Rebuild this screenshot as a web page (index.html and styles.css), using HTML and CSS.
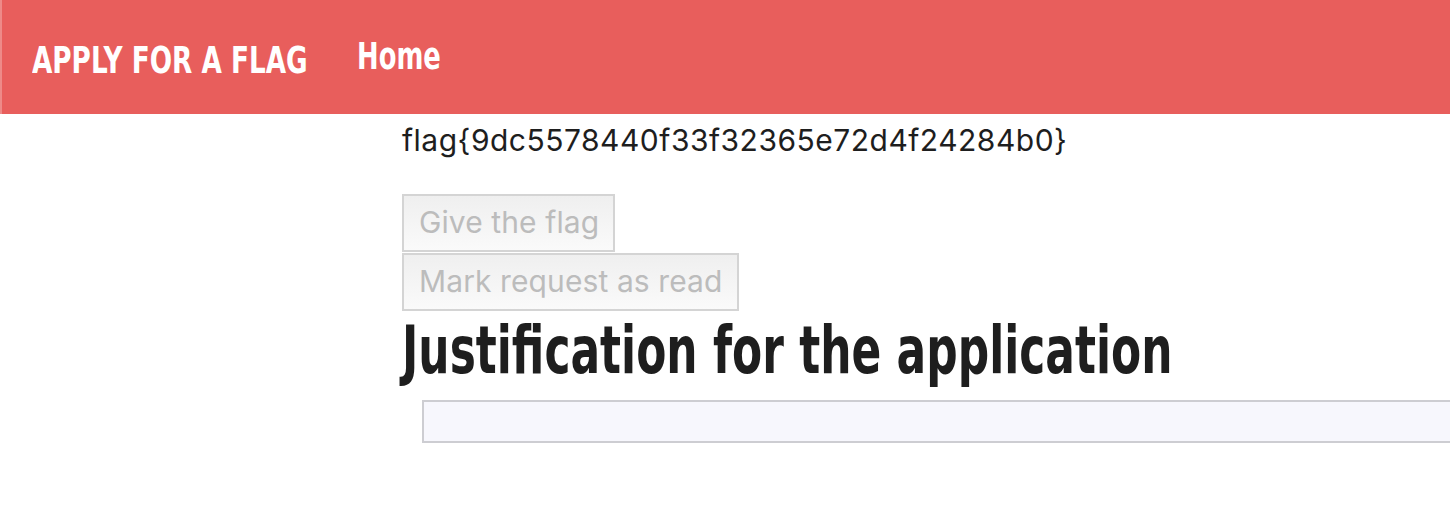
FILE: index.html
```html
<!DOCTYPE html>
<html>
<head>
<meta charset="utf-8">
<link rel="stylesheet" href="styles.css">
</head>
<body>
<header class="topbar">
  <a class="brand" href="#">APPLY FOR A FLAG</a>
  <a class="nav-link" href="#">Home</a>
</header>
<main class="content">
  <p class="flag">flag{9dc5578440f33f32365e72d4f24284b0}</p>
  <div class="actions">
    <button class="btn" disabled>Give the flag</button>
    <button class="btn" disabled>Mark request as read</button>
  </div>
  <h1 class="title"><span class="title-text">Justification for the application</span></h1>
  <div class="justification"></div>
</main>
</body>
</html>
```
FILE: styles.css
```css
html, body {
  margin: 0;
  padding: 0;
  background: #fff;
  overflow: hidden;
}
body {
  font-family: Inter, "Liberation Sans", Arial, sans-serif;
  color: #1e1e1e;
}
.topbar {
  height: 114px;
  background: #e85e5c;
  border-left: 2px solid #ee8a88;
  display: flex;
  align-items: center;
  padding-left: 30px;
  box-sizing: border-box;
}
.brand, .nav-link {
  display: inline-block;
  color: #fff;
  text-decoration: none;
  font-family: "DejaVu Sans", sans-serif;
  font-weight: bold;
  font-size: 38px;
  transform-origin: left center;
}
.brand {
  transform: scaleX(0.692);
  margin-top: 6px;
  margin-right: -73px;
}
.nav-link {
  transform: scaleX(0.68);
  margin-bottom: 2px;
}
.content {
  padding-left: 402px;
}
.flag {
  margin: 8px 0 0 0;
  font-size: 30px;
  letter-spacing: 0.5px;
  line-height: 36px;
}
.actions {
  margin-top: 36px;
  display: flex;
  flex-direction: column;
  align-items: flex-start;
}
.btn {
  font-family: Inter, "Liberation Sans", Arial, sans-serif;
  font-size: 30px;
  letter-spacing: 0.1px;
  color: #bcbcbc;
  background: linear-gradient(#efefef, #fafafa);
  border: 2px solid #d4d4d4;
  padding: 9px 14px 11px 15px;
  line-height: 34px;
  margin: 0;
}
.btn + .btn {
  margin-top: 1px;
}
.title {
  font-family: "DejaVu Sans", sans-serif;
  font-weight: bold;
  font-size: 65px;
  line-height: 72px;
  margin: 4px 0 13px 0;
  color: #1e1e1e;
  white-space: nowrap;
}
.title-text {
  display: inline-block;
  transform: scaleX(0.676);
  transform-origin: left center;
}
.justification {
  margin-left: 20px;
  height: 39px;
  border: 2px solid #cdcdd2;
  border-right: none;
  background: #f7f7fd;
}
```
